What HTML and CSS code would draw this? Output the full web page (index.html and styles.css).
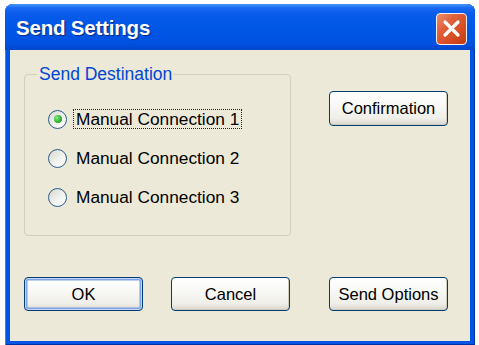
FILE: index.html
```html
<!DOCTYPE html>
<html lang="en">

<head>
    <meta charset="UTF-8">
    <title>Send Settings</title>
    <link rel="stylesheet" href="styles.css">
</head>

<body>
    <div class="window">
        <div class="titlebar">
            <span class="title">Send Settings</span>
            <div class="close">
                <svg width="19" height="19" viewBox="0 0 19 19">
                    <path d="M3 3 L16 16 M16 3 L3 16" stroke="#fff" stroke-width="3.2" stroke-linecap="round" />
                </svg>
            </div>
        </div>
        <div class="client">
            <div class="top">
                <fieldset class="group">
                    <legend>Send Destination</legend>
                    <div class="options-list">
                        <div class="option">
                            <span class="radio checked"></span>
                            <span class="label focus">Manual Connection 1</span>
                        </div>
                        <div class="option">
                            <span class="radio"></span>
                            <span class="label">Manual Connection 2</span>
                        </div>
                        <div class="option">
                            <span class="radio"></span>
                            <span class="label">Manual Connection 3</span>
                        </div>
                    </div>
                </fieldset>
                <div class="side">
                    <button class="btn">Confirmation</button>
                </div>
            </div>
            <div class="bottom">
                <button class="btn default">OK</button>
                <button class="btn cancel">Cancel</button>
                <button class="btn options">Send Options</button>
            </div>
        </div>
    </div>
</body>

</html>
```

FILE: styles.css
```css
* {
    margin: 0;
    padding: 0;
    box-sizing: border-box;
}

body {
    background: #fff;
    padding: 4px 0 0 5px;
    font-family: "Liberation Sans", Arial, sans-serif;
}

.window {
    width: 470px;
    height: 341px;
    display: flex;
    flex-direction: column;
    background: #0055e5;
    border-radius: 8px 8px 0 0;
    box-shadow: inset 1px 0 0 #3a80f0, inset -1px 0 0 #0030a8, inset 0 -1px 0 #0030a8;
}

.titlebar {
    height: 46px;
    display: flex;
    align-items: center;
    justify-content: space-between;
    padding: 0 8px 0 11px;
    border-radius: 8px 8px 0 0;
    background: linear-gradient(to bottom, #4a96f8 0, #1a6af2 8%, #0a5cea 20%, #0056e6 55%, #0052e0 85%, #0046cc 100%);
}

.title {
    color: #fff;
    font-weight: bold;
    font-size: 20.5px;
    letter-spacing: -0.2px;
    text-shadow: 1px 1px 1px #0a2a80;
    margin-top: 1px;
}

.close {
    width: 31px;
    height: 32px;
    margin-top: 3px;
    border: 1.5px solid #f4f0ee;
    border-radius: 4px;
    background: linear-gradient(135deg, #f08c6a 0, #e0603a 35%, #d4481e 75%, #c23c14 100%);
    display: flex;
    align-items: center;
    justify-content: center;
}

.client {
    flex: 1;
    margin: 0 5px 4px 5px;
    background: #ece9d8;
    padding-top: 15px;
    display: flex;
    flex-direction: column;
}

.top {
    display: flex;
}

.group {
    margin-left: 14px;
    width: 267px;
    height: 171px;
    border: 1px solid #d0d0bf;
    border-radius: 4px;
    padding: 0;
}

.group legend {
    margin-left: 12px;
    padding: 0 2px;
    color: #0046d5;
    font-size: 17.5px;
    line-height: 18px;
}

.options-list {
    padding-left: 23px;
}

.option {
    display: flex;
    align-items: center;
    height: 20px;
    margin-top: 19px;
}

.option:first-child {
    margin-top: 26px;
}

.radio {
    width: 19px;
    height: 19px;
    border-radius: 50%;
    border: 1px solid #2a5a8a;
    background: linear-gradient(135deg, #d8d7cf 0, #f2f2ee 55%, #fff 100%);
    display: flex;
    align-items: center;
    justify-content: center;
    flex: none;
}

.radio.checked::after {
    content: "";
    width: 8px;
    height: 8px;
    border-radius: 50%;
    background: radial-gradient(circle at 35% 35%, #8ee88e 0, #2fb42f 55%, #1a8c1a 100%);
}

.label {
    margin-left: 6px;
    padding: 0 2px;
    font-size: 17.3px;
    line-height: 18px;
    color: #000;
    border: 1px solid transparent;
}

.label.focus {
    border: 1px dotted #222;
}

.side {
    margin-left: 38px;
    padding-top: 26px;
}

.btn {
    width: 119px;
    height: 35px;
    font-family: "Liberation Sans", Arial, sans-serif;
    font-size: 16.5px;
    color: #000;
    border: 1px solid #003c74;
    border-radius: 4px;
    background: linear-gradient(to bottom, #ffffff 0, #f8f8f5 40%, #efeee8 80%, #d9d6cc 100%);
    box-shadow: inset -1px -1px 0 #cfccc0;
}

.bottom {
    display: flex;
    margin-top: 41px;
    padding-left: 14px;
}

.bottom .btn {
    height: 34px;
}

.btn.default {
    box-shadow: inset 0 0 0 1px #c2d6f8, inset 0 0 0 2.5px #7fa3e6;
}

.btn.cancel {
    margin-left: 28px;
}

.btn.options {
    margin-left: 39px;
}
```
